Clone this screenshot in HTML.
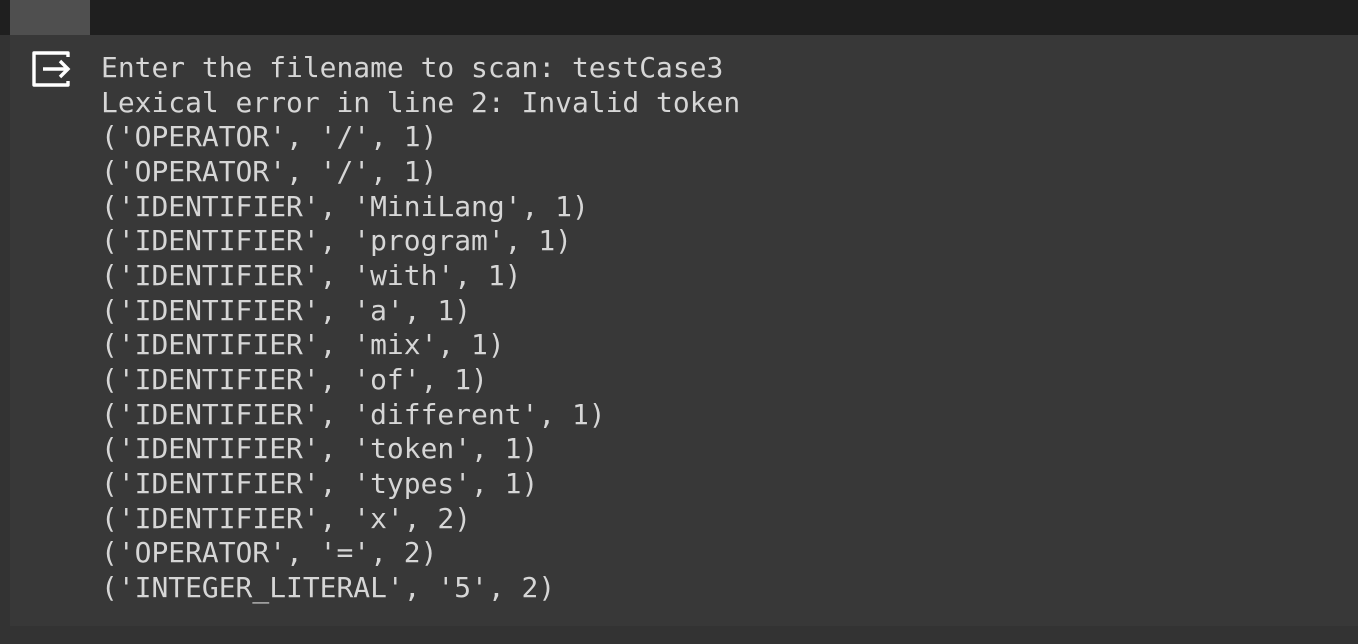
<!DOCTYPE html>
<html><head><meta charset="utf-8"><style>
html,body{margin:0;padding:0;width:1358px;height:644px;overflow:hidden;background:#333333;}
.top{position:absolute;left:0;top:0;width:1358px;height:35px;background:#1f1f1f;}
.tab{position:absolute;left:10px;top:0;width:80px;height:35px;background:#4f4f4f;}
.left{position:absolute;left:0;top:0;width:10px;height:644px;background:#333;}
.out{position:absolute;left:10px;top:35px;width:1348px;height:591px;background:#383838;}
pre{position:absolute;left:101px;top:51px;margin:0;font-family:"DejaVu Sans Mono","Liberation Mono",monospace;font-size:27.95px;line-height:34.67px;color:#d6d6d6;}
svg{position:absolute;left:30px;top:49px;}
</style></head><body>
<div class="left"></div>
<div class="top"></div><div class="tab"></div>
<div class="out"></div>
<svg width="42" height="40" viewBox="0 0 42 40"><path d="M38 8 V4 H4 V36 H38 V32" fill="none" stroke="#ffffff" stroke-width="3.4" stroke-linejoin="round"/><path d="M13 20 H38 M30 12 L38 20 L30 28" fill="none" stroke="#ffffff" stroke-width="3.4"/></svg>
<pre>Enter the filename to scan: testCase3
Lexical error in line 2: Invalid token
('OPERATOR', '/', 1)
('OPERATOR', '/', 1)
('IDENTIFIER', 'MiniLang', 1)
('IDENTIFIER', 'program', 1)
('IDENTIFIER', 'with', 1)
('IDENTIFIER', 'a', 1)
('IDENTIFIER', 'mix', 1)
('IDENTIFIER', 'of', 1)
('IDENTIFIER', 'different', 1)
('IDENTIFIER', 'token', 1)
('IDENTIFIER', 'types', 1)
('IDENTIFIER', 'x', 2)
('OPERATOR', '=', 2)
('INTEGER_LITERAL', '5', 2)</pre>
</body></html>
